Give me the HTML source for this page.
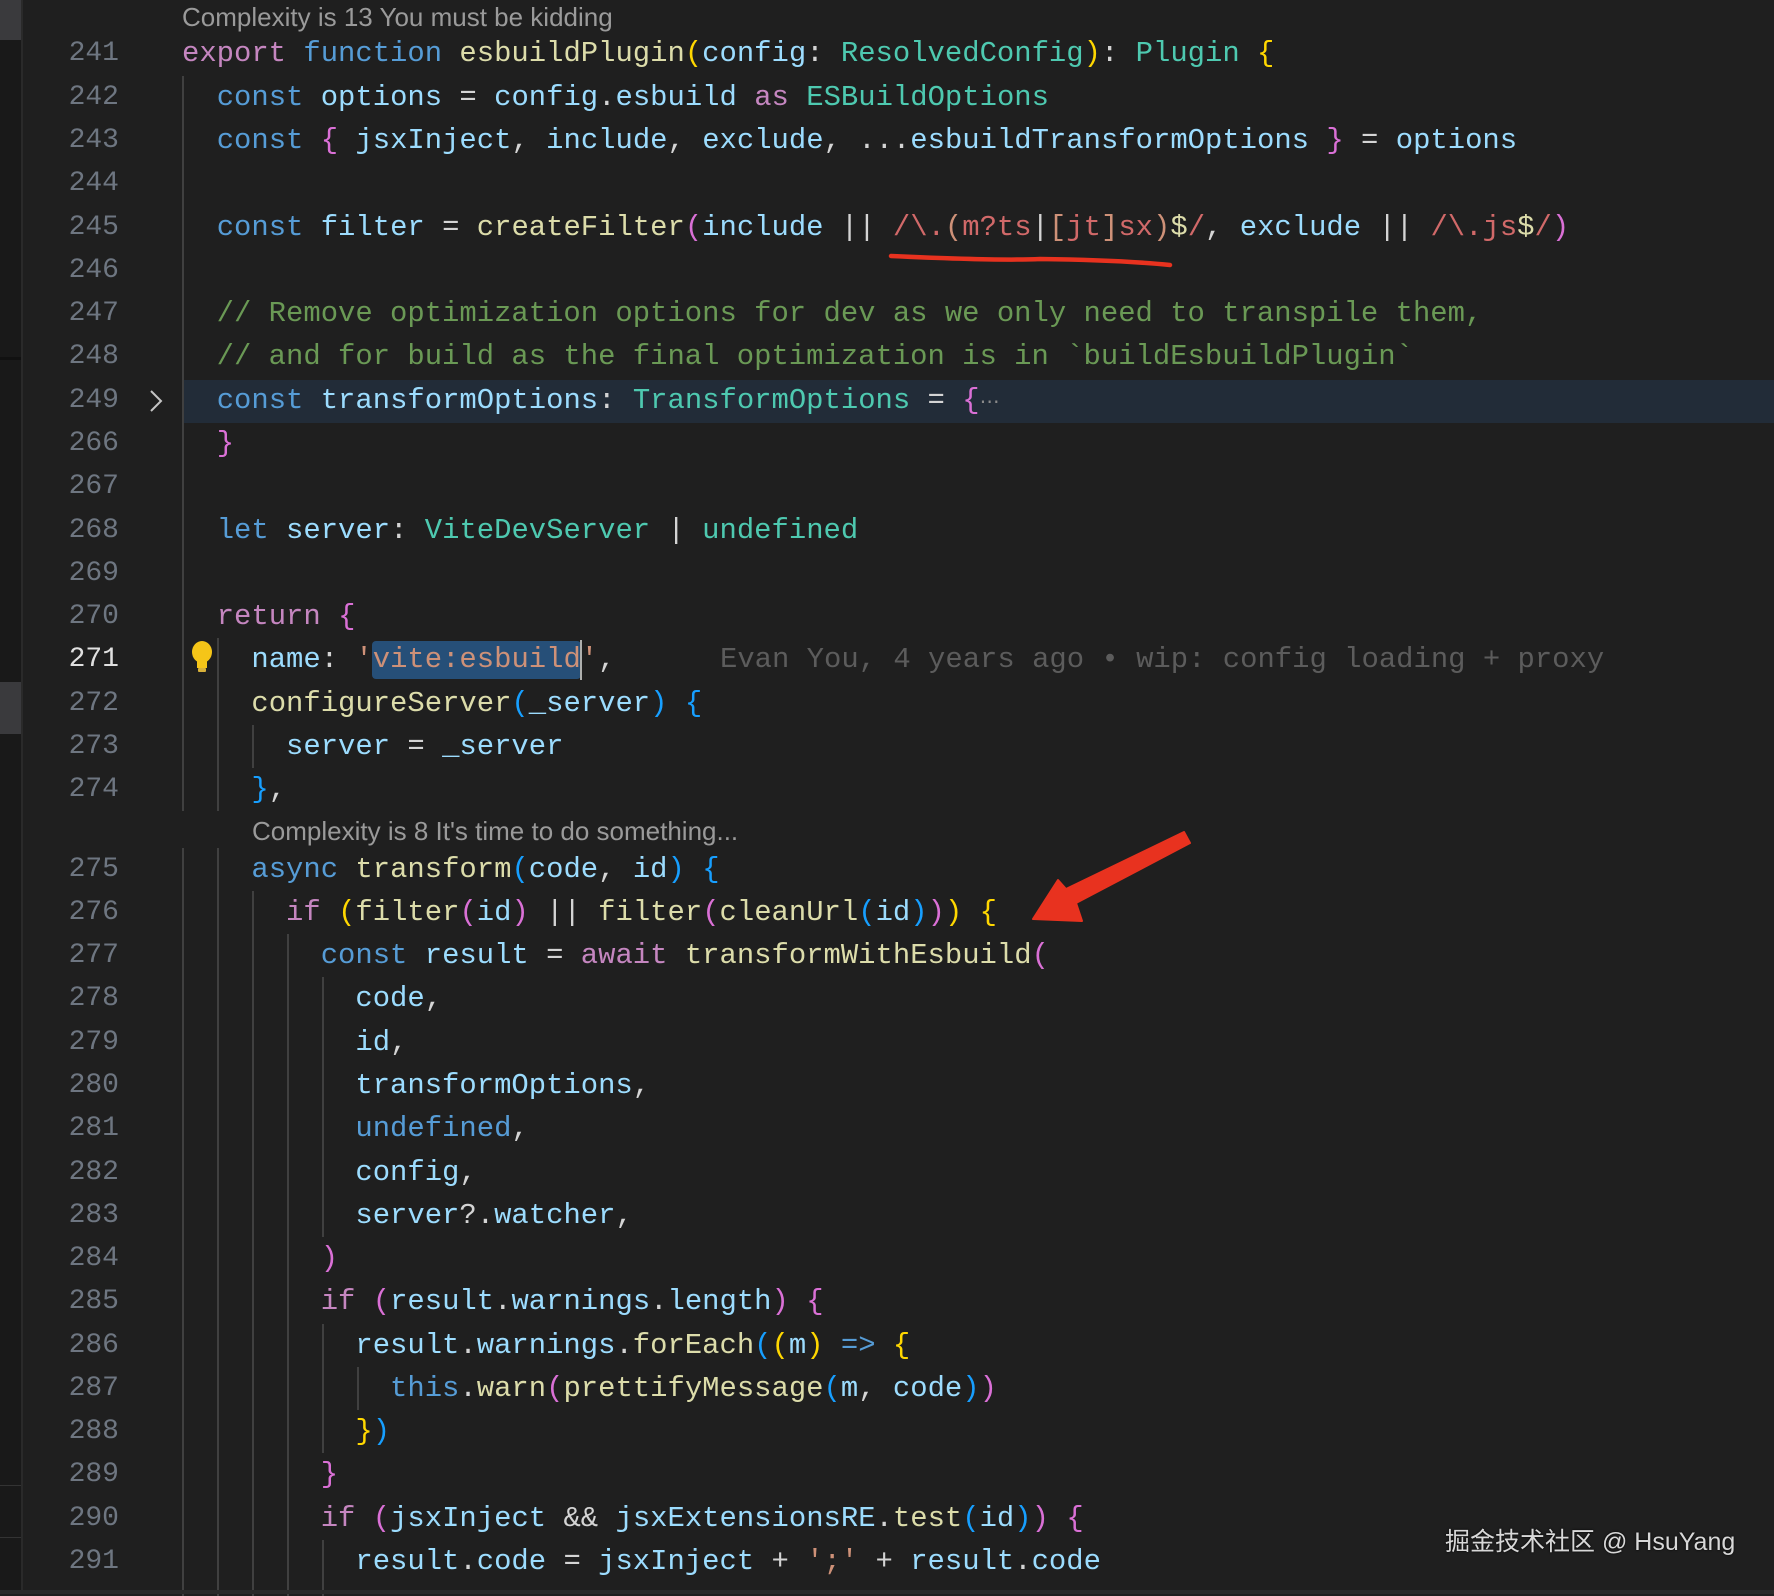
<!DOCTYPE html>
<html><head><meta charset="utf-8"><style>
html,body{margin:0;padding:0}
body{width:1774px;height:1594px;background:#1f1f1f;position:relative;overflow:hidden;font-family:"Liberation Mono",monospace}
.w{position:absolute;left:0;top:2px;width:1774px;height:1594px}
.ln{position:absolute;left:40px;width:79px;text-align:right;font-size:28px;color:#6e7681;height:43.28px;line-height:43.28px}
.cd{position:absolute;left:182px;font-size:28.9px;height:43.28px;line-height:43.28px;white-space:pre;color:#d4d4d4}
.g{position:absolute;width:1.5px;background:#404040}
.lens{position:absolute;font-family:"Liberation Sans",sans-serif;font-size:26px;color:#9a9a9a;white-space:pre}
.k{color:#c586c0}.b{color:#569cd6}.f{color:#dcdcaa}.v{color:#9cdcfe}.t{color:#4ec9b0}.y{color:#ffd700}.m{color:#da70d6}.c{color:#179fff}.r{color:#d16969}.s{color:#ce9178}.cm{color:#6a9955}.p{color:#d4d4d4}
</style></head><body>
<div style="position:absolute;left:0;top:0;width:21px;height:1594px;background:#191919"></div>
<div style="position:absolute;left:21px;top:0;width:2px;height:1594px;background:#2a2a2a"></div>
<div style="position:absolute;left:0;top:0;width:21px;height:40px;background:#3a3a3d"></div>
<div style="position:absolute;left:0;top:357px;width:21px;height:3px;background:#111"></div>
<div style="position:absolute;left:0;top:682px;width:21px;height:52px;background:#3a3a3d"></div>
<div style="position:absolute;left:0;top:1485px;width:21px;height:1px;background:#333"></div>
<div style="position:absolute;left:0;top:1537px;width:21px;height:1px;background:#333"></div>
<div class="w">
<div style="position:absolute;left:182px;top:378px;width:1592px;height:43px;background:#222c38"></div>

<div class="g" style="left:182px;top:73.7px;height:735.7px"></div>
<div class="g" style="left:182px;top:845.5px;height:748.5px"></div>
<div class="g" style="left:217px;top:636.3px;height:173.1px"></div>
<div class="g" style="left:217px;top:845.5px;height:748.5px"></div>
<div class="g" style="left:252px;top:722.9px;height:43.3px"></div>
<div class="g" style="left:252px;top:888.8px;height:705.2px"></div>
<div class="g" style="left:287px;top:932.1px;height:662px"></div>
<div class="g" style="left:322px;top:975.4px;height:259.6px"></div>
<div class="g" style="left:322px;top:1321.6px;height:129.8px"></div>
<div class="g" style="left:322px;top:1538px;height:56px"></div>
<div class="g" style="left:357px;top:1364.9px;height:43.3px"></div>

<div class="lens" style="left:182px;top:0px">Complexity is 13 You must be kidding</div>
<div class="lens" style="left:252px;top:814px">Complexity is 8 It's time to do something...</div>

<div class="ln" style="top:30.4px">241</div><div class="cd" style="top:30.4px"><span class="k">export</span> <span class="b">function</span> <span class="f">esbuildPlugin</span><span class="y">(</span><span class="v">config</span>: <span class="t">ResolvedConfig</span><span class="y">)</span>: <span class="t">Plugin</span> <span class="y">{</span></div>
<div class="ln" style="top:73.7px">242</div><div class="cd" style="top:73.7px">  <span class="b">const</span> <span class="v">options</span> = <span class="v">config</span>.<span class="v">esbuild</span> <span class="k">as</span> <span class="t">ESBuildOptions</span></div>
<div class="ln" style="top:117px">243</div><div class="cd" style="top:117px">  <span class="b">const</span> <span class="m">{</span> <span class="v">jsxInject</span>, <span class="v">include</span>, <span class="v">exclude</span>, ...<span class="v">esbuildTransformOptions</span> <span class="m">}</span> = <span class="v">options</span></div>
<div class="ln" style="top:160.2px">244</div>
<div class="ln" style="top:203.5px">245</div><div class="cd" style="top:203.5px">  <span class="b">const</span> <span class="v">filter</span> = <span class="f">createFilter</span><span class="m">(</span><span class="v">include</span> || <span class="r">/\.</span><span class="s">(</span><span class="r">m?ts</span><span class="p">|</span><span class="s">[</span><span class="r">jt</span><span class="s">]</span><span class="r">sx</span><span class="s">)</span><span class="f">$</span><span class="r">/</span>, <span class="v">exclude</span> || <span class="r">/\.js</span><span class="f">$</span><span class="r">/</span><span class="m">)</span></div>
<div class="ln" style="top:246.8px">246</div>
<div class="ln" style="top:290.1px">247</div><div class="cd cm" style="top:290.1px">  // Remove optimization options for dev as we only need to transpile them,</div>
<div class="ln" style="top:333.4px">248</div><div class="cd cm" style="top:333.4px">  // and for build as the final optimization is in `buildEsbuildPlugin`</div>
<div class="ln" style="top:376.6px">249</div><div class="cd" style="top:376.6px">  <span class="b">const</span> <span class="v">transformOptions</span>: <span class="t">TransformOptions</span> = <span class="m">{</span><span style="color:#8a8a8a;font-size:20px">⋯</span></div>
<svg style="position:absolute;left:148px;top:386px" width="16" height="26"><path d="M3 3 L13 13 L3 23" fill="none" stroke="#c5c5c5" stroke-width="2"/></svg>
<div class="ln" style="top:419.9px">266</div><div class="cd" style="top:419.9px">  <span class="m">}</span></div>
<div class="ln" style="top:463.2px">267</div>
<div class="ln" style="top:506.5px">268</div><div class="cd" style="top:506.5px">  <span class="b">let</span> <span class="v">server</span>: <span class="t">ViteDevServer</span> | <span class="t">undefined</span></div>
<div class="ln" style="top:549.8px">269</div>
<div class="ln" style="top:593px">270</div><div class="cd" style="top:593px">  <span class="k">return</span> <span class="m">{</span></div>
<div class="ln" style="top:636.3px;color:#e0e0e0">271</div>
<div style="position:absolute;left:372px;top:639px;width:209px;height:38px;background:#264f78;border-radius:4px"></div>
<div style="position:absolute;left:580px;top:638px;width:2px;height:40px;background:#aeafad"></div>
<div class="cd" style="top:636.3px">    <span class="v">name</span>: <span class="s">'vite:esbuild'</span>,</div>
<div class="lens" style="left:720px;top:636.3px;font-family:'Liberation Mono',monospace;font-size:28.9px;line-height:43.28px;color:#5c5c5c">Evan You, 4 years ago • wip: config loading + proxy</div>
<svg style="position:absolute;left:190px;top:638px" width="24" height="36"><ellipse cx="12" cy="12" rx="10" ry="11" fill="#f5c518"/><rect x="7" y="20" width="10" height="8" fill="#f5c518"/><rect x="8" y="28" width="8" height="4" rx="1" fill="#d8b13a"/></svg>
<div class="ln" style="top:679.6px">272</div><div class="cd" style="top:679.6px">    <span class="f">configureServer</span><span class="c">(</span><span class="v">_server</span><span class="c">)</span> <span class="c">{</span></div>
<div class="ln" style="top:722.9px">273</div><div class="cd" style="top:722.9px">      <span class="v">server</span> = <span class="v">_server</span></div>
<div class="ln" style="top:766.2px">274</div><div class="cd" style="top:766.2px">    <span class="c">}</span>,</div>
<div class="ln" style="top:845.5px">275</div><div class="cd" style="top:845.5px">    <span class="b">async</span> <span class="f">transform</span><span class="c">(</span><span class="v">code</span>, <span class="v">id</span><span class="c">)</span> <span class="c">{</span></div>
<div class="ln" style="top:888.8px">276</div><div class="cd" style="top:888.8px">      <span class="k">if</span> <span class="y">(</span><span class="f">filter</span><span class="m">(</span><span class="v">id</span><span class="m">)</span> || <span class="f">filter</span><span class="m">(</span><span class="f">cleanUrl</span><span class="c">(</span><span class="v">id</span><span class="c">)</span><span class="m">)</span><span class="y">)</span> <span class="y">{</span></div>
<div class="ln" style="top:932.1px">277</div><div class="cd" style="top:932.1px">        <span class="b">const</span> <span class="v">result</span> = <span class="k">await</span> <span class="f">transformWithEsbuild</span><span class="m">(</span></div>
<div class="ln" style="top:975.4px">278</div><div class="cd" style="top:975.4px">          <span class="v">code</span>,</div>
<div class="ln" style="top:1018.6px">279</div><div class="cd" style="top:1018.6px">          <span class="v">id</span>,</div>
<div class="ln" style="top:1061.9px">280</div><div class="cd" style="top:1061.9px">          <span class="v">transformOptions</span>,</div>
<div class="ln" style="top:1105.2px">281</div><div class="cd" style="top:1105.2px">          <span class="b">undefined</span>,</div>
<div class="ln" style="top:1148.5px">282</div><div class="cd" style="top:1148.5px">          <span class="v">config</span>,</div>
<div class="ln" style="top:1191.8px">283</div><div class="cd" style="top:1191.8px">          <span class="v">server</span>?.<span class="v">watcher</span>,</div>
<div class="ln" style="top:1235px">284</div><div class="cd" style="top:1235px">        <span class="m">)</span></div>
<div class="ln" style="top:1278.3px">285</div><div class="cd" style="top:1278.3px">        <span class="k">if</span> <span class="m">(</span><span class="v">result</span>.<span class="v">warnings</span>.<span class="v">length</span><span class="m">)</span> <span class="m">{</span></div>
<div class="ln" style="top:1321.6px">286</div><div class="cd" style="top:1321.6px">          <span class="v">result</span>.<span class="v">warnings</span>.<span class="f">forEach</span><span class="c">(</span><span class="y">(</span><span class="v">m</span><span class="y">)</span> <span class="b">=&gt;</span> <span class="y">{</span></div>
<div class="ln" style="top:1364.9px">287</div><div class="cd" style="top:1364.9px">            <span class="b">this</span>.<span class="f">warn</span><span class="m">(</span><span class="f">prettifyMessage</span><span class="c">(</span><span class="v">m</span>, <span class="v">code</span><span class="c">)</span><span class="m">)</span></div>
<div class="ln" style="top:1408.2px">288</div><div class="cd" style="top:1408.2px">          <span class="y">}</span><span class="c">)</span></div>
<div class="ln" style="top:1451.4px">289</div><div class="cd" style="top:1451.4px">        <span class="m">}</span></div>
<div class="ln" style="top:1494.7px">290</div><div class="cd" style="top:1494.7px">        <span class="k">if</span> <span class="m">(</span><span class="v">jsxInject</span> &amp;&amp; <span class="v">jsxExtensionsRE</span>.<span class="f">test</span><span class="c">(</span><span class="v">id</span><span class="c">)</span><span class="m">)</span> <span class="m">{</span></div>
<div class="ln" style="top:1538px">291</div><div class="cd" style="top:1538px">          <span class="v">result</span>.<span class="v">code</span> = <span class="v">jsxInject</span> + <span class="s">';'</span> + <span class="v">result</span>.<span class="v">code</span></div>
</div>

<svg style="position:absolute;left:0;top:0" width="1774" height="1594">
<path d="M891 256 Q1000 261 1040 259 Q1120 260 1170 265" fill="none" stroke="#e8321f" stroke-width="4.5" stroke-linecap="round"/>
<polygon points="1033,919 1082,921 1076,903 1190,843 1184,832 1066,889 1058,880" fill="#e8321f" stroke="#e8321f" stroke-width="2" stroke-linejoin="round"/>
</svg>

<div style="position:absolute;left:1445px;top:1522px;font-family:'Liberation Sans','Noto Sans CJK SC',sans-serif;font-size:25px;color:#d8d8d8;text-shadow:0 0 2px #000;white-space:pre">掘金技术社区 @ HsuYang</div>
<div style="position:absolute;left:0;top:1590px;width:1774px;height:4px;background:#2a2a2a"></div>
</body></html>
